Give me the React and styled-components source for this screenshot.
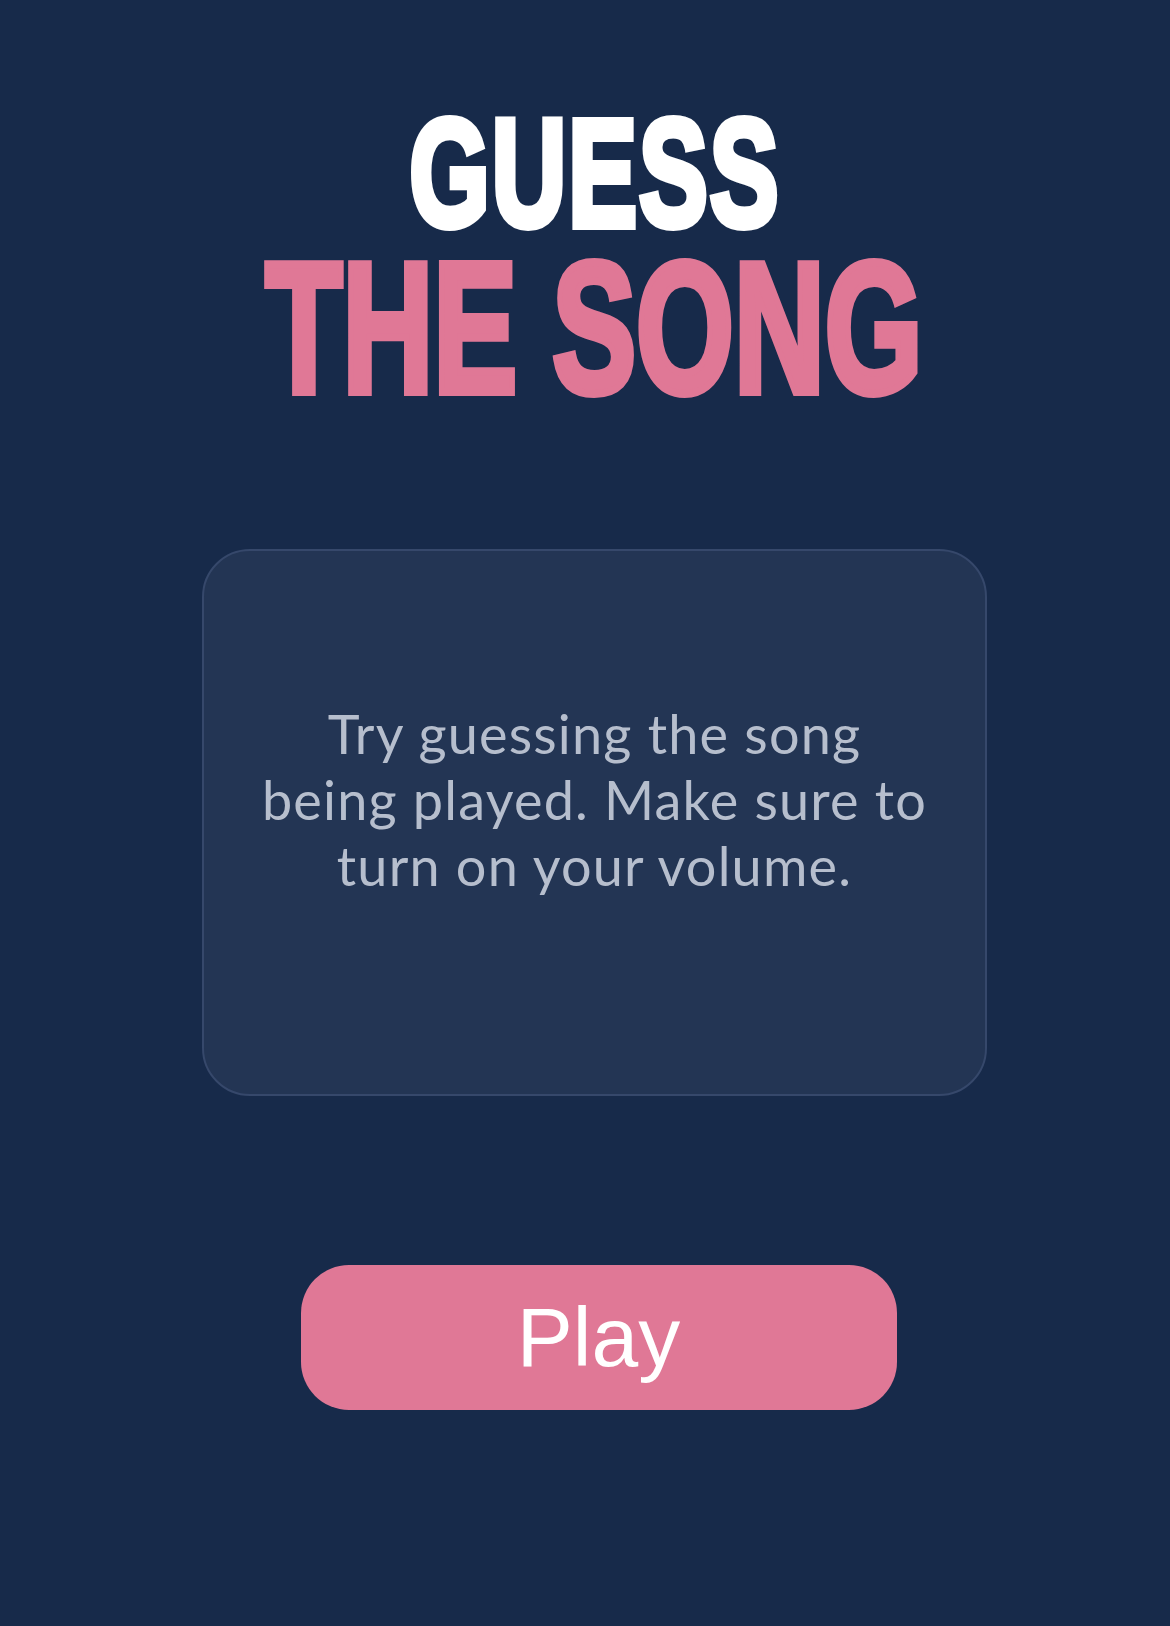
import styled, { createGlobalStyle } from "styled-components";

const GlobalStyle = createGlobalStyle`
  html, body {
    margin: 0;
    padding: 0;
    background: #172a4a;
  }
  body {
    font-family: "Liberation Sans", Arial, sans-serif;
  }
`;

const Page = styled.div`
  min-height: 1626px;
  background: #172a4a;
  display: flex;
  flex-direction: column;
  align-items: center;
  padding-left: 19px;
  box-sizing: border-box;
`;

const Title = styled.h1`
  margin: 113px 0 0;
  display: flex;
  flex-direction: column;
  align-items: center;
  font-family: "Liberation Sans", Arial, sans-serif;
  font-weight: 700;
  text-transform: uppercase;
`;

// heavy condensed look: thicken with a same-colour stroke, then squeeze
const TitleLine = styled.span`
  display: block;
  font-size: ${(p) => p.size}px;
  line-height: 0.8;
  color: ${(p) => p.color};
  -webkit-text-stroke: ${(p) => p.stroke}px ${(p) => p.color};
  letter-spacing: ${(p) => p.spacing}px;
  padding-left: ${(p) => p.spacing}px;
  transform: scaleX(${(p) => p.squeeze});
  white-space: nowrap;
  & + & {
    margin-top: 19px;
  }
`;

const Card = styled.div`
  margin-top: 147px;
  width: 785px;
  height: 547px;
  box-sizing: border-box;
  background: #233554;
  border: 2px solid #36486b;
  border-radius: 48px;
  display: flex;
  align-items: flex-start;
  justify-content: center;
  padding: 150px 30px 0;
`;

const Blurb = styled.p`
  margin: 0;
  text-align: center;
  font-family: Lato, "Open Sans", sans-serif;
  font-size: 54px;
  line-height: 66px;
  letter-spacing: 1.2px;
  color: #b6becd;
`;

const PlayButton = styled.button`
  margin: 169px 0 0 8px;
  width: 596px;
  height: 145px;
  border: none;
  border-radius: 48px;
  background: #e07896;
  color: #ffffff;
  font-family: "Liberation Sans", Arial, Helvetica, sans-serif;
  font-size: 84px;
  cursor: pointer;
`;

export default function App() {
  return (
    <>
      <GlobalStyle />
      <Page>
        <Title>
          <TitleLine size={152} stroke={8} spacing={3} squeeze={0.678} color="#ffffff">
            Guess
          </TitleLine>
          <TitleLine size={185} stroke={8} spacing={0} squeeze={0.68} color="#e07896">
            The Song
          </TitleLine>
        </Title>
        <Card>
          <Blurb>
            Try guessing the song
            <br />
            being played. Make sure to
            <br />
            turn on your volume.
          </Blurb>
        </Card>
        <PlayButton>Play</PlayButton>
      </Page>
    </>
  );
}
